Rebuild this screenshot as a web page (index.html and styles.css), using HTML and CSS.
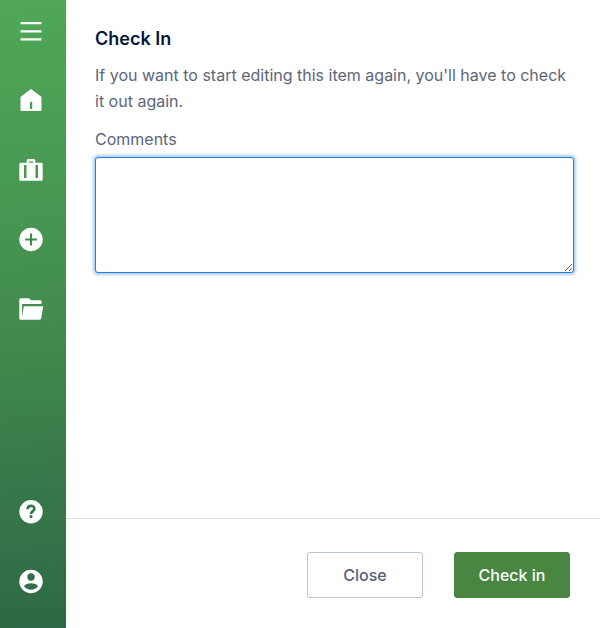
FILE: index.html
```
<!DOCTYPE html>
<html lang="en">
<head>
<meta charset="utf-8">
<meta name="viewport" content="width=device-width, initial-scale=1">
<title>Check In</title>
<link rel="stylesheet" href="styles.css">
</head>
<body>
<div class="app">
  <nav class="sidebar" aria-label="Main">
    <div class="nav-group">
      <button class="nav-item" type="button" aria-label="Menu">
        <svg viewBox="0 0 24 24" fill="none" stroke="currentColor" stroke-width="2.300"><path d="M1.500 5.200h21M1.500 13.300h21M1.500 21.400h21"/></svg>
      </button>
      <a class="nav-item" href="#home" aria-label="Home">
        <svg viewBox="0 0 24 24" fill="currentColor" fill-rule="evenodd"><path d="M12 1 22 8.500q.5.400.5 1V22q0 1-1 1h-19q-1 0-1-1V9.500q0-.6.5-1zM11 14v7h2.200v-7z"/></svg>
      </a>
      <a class="nav-item" href="#work" aria-label="Work">
        <svg viewBox="0 0 24 24" fill="currentColor" fill-rule="evenodd"><path d="M1.500 4.700H7.700V2.500q0-1.500 1.500-1.500h5.600q1.500 0 1.500 1.500v2.200h6.200q1.200 0 1.200 1.200v15.600q0 1.200-1.200 1.200h-21Q.3 22.700.3 21.500V5.900Q.3 4.700 1.500 4.700zM9.800 3.400v1.300h4.400V3.400zM5 7v13h2.500V7zM16.500 7v13H19V7z"/></svg>
      </a>
      <button class="nav-item" type="button" aria-label="Add">
        <svg viewBox="0 0 24 24"><circle cx="12" cy="11.500" r="11.700" fill="currentColor"/><path class="cutout-line" d="M12 5.600v11.800M6.100 11.500h11.800"/></svg>
      </button>
      <a class="nav-item" href="#files" aria-label="Files">
        <svg viewBox="0 0 24 24" fill="currentColor"><path d="M1.600 21.700Q.3 21.700.3 20.400V1.700Q.3.200 1.800.2H10l2 2h9.200q1.300 0 1.300 1.300V6H3.100v13L4.800 8.200H24.200l-2 12q-.3 1.500-1.800 1.500z"/></svg>
      </a>
    </div>
    <div class="nav-group">
      <a class="nav-item" href="#help" aria-label="Help">
        <svg viewBox="0 0 24 24"><circle cx="12" cy="12.800" r="11.700" fill="currentColor"/><path class="help-mark" d="M8.600 10.300C8.600 5.800 15.400 5.800 15.400 9.700c0 2.400-3.400 2.500-3.400 5.300"/><circle class="cutout" cx="12" cy="17.600" r="1.600"/></svg>
      </a>
      <a class="nav-item" href="#account" aria-label="Account">
        <svg viewBox="0 0 24 24"><circle cx="12" cy="12.500" r="11.700" fill="currentColor"/><circle class="cutout" cx="12" cy="8" r="3.700"/><path class="cutout" d="M5 17C7.500 13.200 16.500 13.200 19 17 16.500 22 7.500 22 5 17z"/></svg>
      </a>
    </div>
  </nav>
  <form class="panel">
    <main class="content">
      <h1 class="title">Check In</h1>
      <p class="description">If you want to start editing this item again, you'll have to check it out again.</p>
      <label class="label" for="comments">Comments</label>
      <textarea class="comments" id="comments" name="comments" autofocus></textarea>
    </main>
    <footer class="actions">
      <button class="button" type="button">Close</button>
      <button class="button button-primary" type="submit">Check in</button>
    </footer>
  </form>
</div>
</body>
</html>
```

FILE: styles.css
```
* {
  box-sizing: border-box;
}

body {
  margin: 0;
  background: #fff;
  color: #5b667b;
  font-family: Inter, "Liberation Sans", sans-serif;
  font-size: 16px;
  line-height: 26px;
}

.app {
  display: flex;
  min-height: 100vh;
}

.sidebar {
  display: flex;
  flex: none;
  flex-direction: column;
  justify-content: space-between;
  width: 66px;
  padding: 18px 19px 35px;
  background: linear-gradient(175deg, #4fa857, #44904f 45%, #2e6846);
}

.nav-group {
  display: flex;
  flex-direction: column;
  gap: 46px;
}

.nav-item {
  display: block;
  width: 24px;
  height: 24px;
  padding: 0;
  border: 0;
  background: none;
  color: #fff;
  cursor: pointer;
}

.nav-item svg {
  display: block;
  width: 24px;
  height: 24px;
  overflow: visible;
}

.cutout {
  fill: #31704a;
}

.cutout-line {
  stroke: #408a4e;
  stroke-width: 2.2;
}

.help-mark {
  fill: none;
  stroke: #35774a;
  stroke-width: 2.6;
}

.panel {
  display: flex;
  flex: 1;
  flex-direction: column;
  min-width: 0;
}

.content {
  flex: 1;
  padding: 26px 26px 24px 29px;
}

.title {
  margin: 0 0 10px;
  color: #06183a;
  font-size: 18px;
  font-weight: 600;
  line-height: 26px;
}

.description {
  margin: 0 0 12px;
}

.label {
  display: block;
  margin-bottom: 5px;
}

.comments {
  display: block;
  width: 100%;
  height: 116px;
  padding: 8px;
  border: 1px solid #2f7bcd;
  border-radius: 3px;
  outline: 0;
  background: #fff;
  box-shadow: 0 0 3px 2px #a9cff2;
  color: inherit;
  font: inherit;
  caret-color: transparent;
  resize: both;
}

.actions {
  display: flex;
  justify-content: flex-end;
  gap: 31px;
  padding: 33px 30px 30px;
  border-top: 1px solid #dcdfe6;
}

.button {
  min-width: 116px;
  height: 46px;
  padding: 0 16px;
  border: 1px solid #b9c4d6;
  border-radius: 3px;
  background: #fff;
  color: #566078;
  font: inherit;
  font-weight: 500;
  cursor: pointer;
}

.button-primary {
  border-color: #488641;
  background: #488641;
  color: #fff;
}
```
